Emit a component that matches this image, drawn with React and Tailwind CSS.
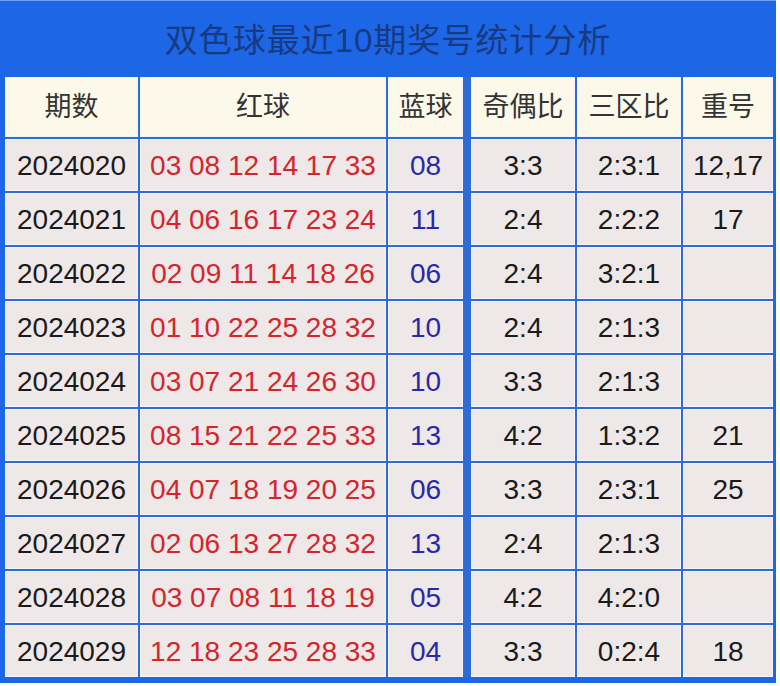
import React from "react";

const rows = [
  ["2024020", "03 08 12 14 17 33", "08", "3:3", "2:3:1", "12,17"],
  ["2024021", "04 06 16 17 23 24", "11", "2:4", "2:2:2", "17"],
  ["2024022", "02 09 11 14 18 26", "06", "2:4", "3:2:1", ""],
  ["2024023", "01 10 22 25 28 32", "10", "2:4", "2:1:3", ""],
  ["2024024", "03 07 21 24 26 30", "10", "3:3", "2:1:3", ""],
  ["2024025", "08 15 21 22 25 33", "13", "4:2", "1:3:2", "21"],
  ["2024026", "04 07 18 19 20 25", "06", "3:3", "2:3:1", "25"],
  ["2024027", "02 06 13 27 28 32", "13", "2:4", "2:1:3", ""],
  ["2024028", "03 07 08 11 18 19", "05", "4:2", "4:2:0", ""],
  ["2024029", "12 18 23 25 28 33", "04", "3:3", "0:2:4", "18"],
];

const heads = ["期数", "红球", "蓝球", "奇偶比", "三区比", "重号"];

const font = { fontFamily: '"Liberation Sans", "Noto Sans CJK SC", sans-serif' };

export default function App() {
  return (
    <div className="w-[780px] h-[686px] bg-white" style={font}>
      <div className="w-[776px] bg-[#1d66e6] border-t border-[#6fa2f2] pl-[5px] pr-[5px] pb-[6px]">
        <div className="h-[76px] pt-[4px] flex items-center justify-center text-[33px] text-[#183a80] tracking-[1px]">
          双色球最近10期奖号统计分析
        </div>
        <div className="grid grid-cols-[133px_246px_81px_104px_104px_90px] gap-[2px] bg-[#2f6bd4]">
          {heads.map((h, i) => (
            <div
              key={h}
              className={
                "h-[60px] flex items-center justify-center bg-[#fcf9ea] border border-[#f4f5fa] text-[27px] text-[#333]" +
                (i === 2 ? " mr-[6px]" : "")
              }
            >
              {h}
            </div>
          ))}
          {rows.map((r) =>
            r.map((c, i) => (
              <div
                key={r[0] + "-" + i}
                className={
                  "h-[52px] pt-[2px] flex items-center justify-center bg-[#efe8e8] border border-[#f7f5f8] text-[28px] " +
                  (i === 1 ? "text-[#d2262c]" : i === 2 ? "text-[#2828a8] mr-[6px]" : "text-[#1a1a1a]")
                }
              >
                {c}
              </div>
            ))
          )}
        </div>
      </div>
    </div>
  );
}
